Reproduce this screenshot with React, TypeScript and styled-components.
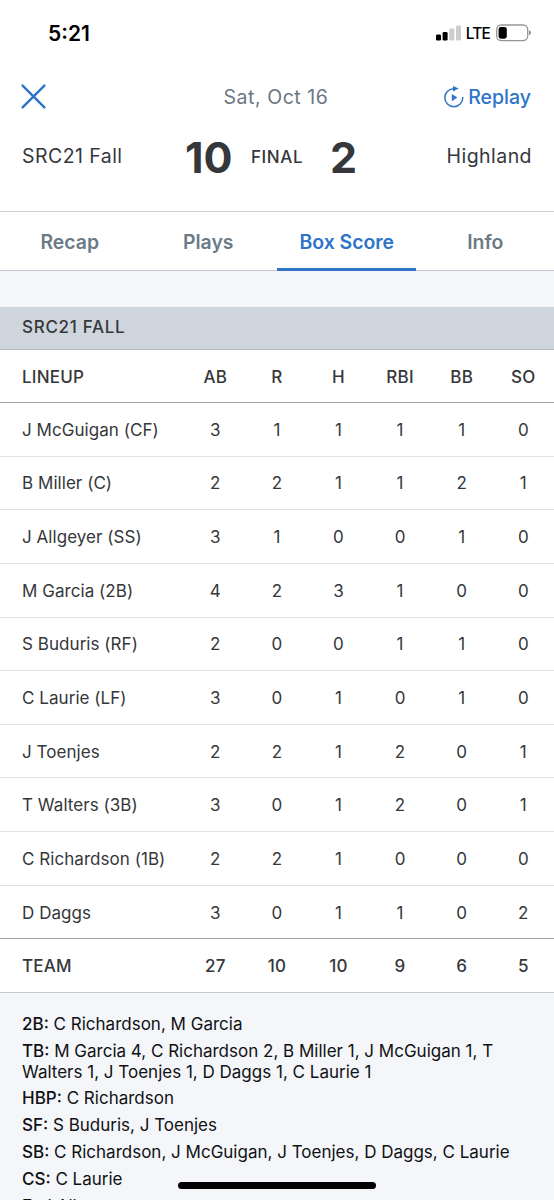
import React from 'react';
import styled, { createGlobalStyle } from 'styled-components';

const Global = createGlobalStyle`
  *, *::before, *::after { box-sizing: border-box; }
  body { margin: 0; background: #fff; font-family: Inter, "Liberation Sans", sans-serif; }
`;

const Screen = styled.main`
  position: relative;
  width: 554px;
  height: 1200px;
  overflow: hidden;
  display: flex;
  flex-direction: column;
  background: #fff;
  color: #35373b;
`;

const StatusBar = styled.div`
  flex: none;
  height: 66px;
  padding: 0 23px 0 48px;
  display: flex;
  align-items: center;
  justify-content: space-between;
  color: #000;
`;

const Clock = styled.span`
  font-size: 21px;
  font-weight: 600;
  letter-spacing: 0;
`;

const Indicators = styled.div`
  display: flex;
  align-items: center;
  gap: 5px;
`;

const Carrier = styled.span`
  font-size: 15.5px;
  font-weight: 500;
  letter-spacing: -0.8px;
  padding-top: 1px;
  margin-right: 1px;
`;

const NavBar = styled.header`
  flex: none;
  height: 62px;
  padding: 0 23px 0 21px;
  display: grid;
  grid-template-columns: 1fr auto 1fr;
  align-items: center;
`;

const CloseButton = styled.button`
  justify-self: start;
  display: flex;
  padding: 0 0 1px;
  border: 0;
  background: none;
`;

const GameDate = styled.span`
  font-size: 19.5px;
  letter-spacing: 0.55px;
  color: #6c7683;
`;

const ReplayButton = styled.button`
  justify-self: end;
  display: flex;
  align-items: center;
  gap: 4px;
  padding: 0;
  border: 0;
  background: none;
  font: 500 19.5px Inter, sans-serif;
  color: #2d74ca;
`;

const ScoreBoard = styled.section`
  flex: none;
  height: 83px;
  padding: 0 22px 27px;
  display: grid;
  grid-template-columns: 163px 48px 97px 1fr auto;
  align-items: center;
`;

const TeamName = styled.span`
  font-size: 19.5px;
  letter-spacing: 0.45px;
`;

const Score = styled.span`
  padding-top: 2px;
  font-size: 43px;
  font-weight: 700;
  line-height: 50px;
`;

const GameState = styled.span`
  padding: 1px 0 0 18px;
  font-size: 17px;
  font-weight: 500;
  letter-spacing: 0.6px;
`;

const Tabs = styled.nav`
  flex: none;
  height: 60px;
  display: grid;
  grid-template-columns: repeat(4, 1fr);
  border-top: 1px solid #c9cfd5;
  border-bottom: 1px solid #c5c9cf;
`;

const Tab = styled.button<{ $active?: boolean }>`
  height: 59px;
  padding: 3px 0 0 1px;
  border: 0;
  border-bottom: 3px solid ${p => (p.$active ? '#2d74ca' : 'transparent')};
  background: none;
  font: 600 19.4px Inter, sans-serif;
  color: ${p => (p.$active ? '#2d74ca' : '#6c7a87')};
`;

const TeamHeading = styled.h2`
  flex: none;
  height: 43px;
  margin: 36px 0 0;
  padding-left: 22px;
  border-bottom: 1px solid #b4bcc5;
  background: #cfd5dc;
  font-size: 17px;
  font-weight: 500;
  line-height: 41px;
  letter-spacing: 0.7px;
`;

const Content = styled.div`
  flex: 1;
  display: flex;
  flex-direction: column;
  background: #f4f6f9;
`;

const BoxTable = styled.div`
  flex: none;
  background: #fff;
`;

const Row = styled.div<{ $strong?: boolean; $line?: string; $height?: number }>`
  height: ${p => p.$height || 53.65}px;
  padding: 1px 0 0 22px;
  display: grid;
  grid-template-columns: 162.5px repeat(6, 61.6px);
  align-items: center;
  border-bottom: 1px solid ${p => p.$line || '#dedfe1'};
  font-size: 17px;
  font-weight: ${p => (p.$strong ? 500 : 400)};
  letter-spacing: ${p => (p.$strong ? 0.2 : 0.05)}px;
`;

const Stat = styled.span`
  text-align: center;
`;

const Notes = styled.div`
  display: flex;
  flex-direction: column;
  gap: 6px;
  padding: 21px 22px 0;
  font-size: 17px;
  line-height: 20.8px;
  color: #101114;
`;

const Note = styled.p`
  margin: 0;
`;

const NoteLabel = styled.b`
  font-weight: 500;
`;

const HomeIndicator = styled.div`
  position: absolute;
  left: 178px;
  bottom: 11px;
  width: 198px;
  height: 7px;
  border-radius: 4px;
  background: #000;
`;

const columns = ['AB', 'R', 'H', 'RBI', 'BB', 'SO'];

const lineup: [string, number[]][] = [
  ['J McGuigan (CF)', [3, 1, 1, 1, 1, 0]],
  ['B Miller (C)', [2, 2, 1, 1, 2, 1]],
  ['J Allgeyer (SS)', [3, 1, 0, 0, 1, 0]],
  ['M Garcia (2B)', [4, 2, 3, 1, 0, 0]],
  ['S Buduris (RF)', [2, 0, 0, 1, 1, 0]],
  ['C Laurie (LF)', [3, 0, 1, 0, 1, 0]],
  ['J Toenjes', [2, 2, 1, 2, 0, 1]],
  ['T Walters (3B)', [3, 0, 1, 2, 0, 1]],
  ['C Richardson (1B)', [2, 2, 1, 0, 0, 0]],
  ['D Daggs', [3, 0, 1, 1, 0, 2]],
];

const totals = [27, 10, 10, 9, 6, 5];

const notes = [
  ['2B', 'C Richardson, M Garcia'],
  ['TB', 'M Garcia 4, C Richardson 2, B Miller 1, J McGuigan 1, T Walters 1, J Toenjes 1, D Daggs 1, C Laurie 1'],
  ['HBP', 'C Richardson'],
  ['SF', 'S Buduris, J Toenjes'],
  ['SB', 'C Richardson, J McGuigan, J Toenjes, D Daggs, C Laurie'],
  ['CS', 'C Laurie'],
  ['E', 'J Allgeyer'],
];

const SignalIcon = () => (
  <svg width="25" height="16" viewBox="0 0 25 16">
    <rect x="0" y="9.5" width="5" height="6" rx="1.3" />
    <rect x="6.6" y="7" width="5" height="8.5" rx="1.3" />
    <rect x="13.3" y="3.5" width="5" height="12" rx="1.3" fill="#ccc" />
    <rect x="20" y="0.5" width="5" height="15" rx="1.3" fill="#ccc" />
  </svg>
);

const BatteryIcon = () => (
  <svg width="35" height="18" viewBox="0 0 35 18">
    <rect x="0.7" y="1" width="31" height="15.6" rx="4.5" fill="none" stroke="#969696" strokeWidth="1.3" />
    <rect x="2.6" y="2.9" width="8.2" height="11.8" rx="2.4" />
    <path d="M33 6.3q1.9.8 1.9 2.5T33 11.3z" fill="#888" />
  </svg>
);

const CloseIcon = () => (
  <svg width="25" height="25" viewBox="0 0 25 25" stroke="#2d74ca" strokeWidth="2.4" strokeLinecap="round">
    <path d="M1.6 1.6 23.4 23.4M23.4 1.6 1.6 23.4" />
  </svg>
);

const ReplayIcon = () => (
  <svg width="20" height="22" viewBox="0 0 20 22" fill="none" stroke="#2d74ca" strokeWidth="1.5">
    <path d="M10.5 2.7H10A9 9 0 1 0 18.8 11.6" strokeLinecap="round" />
    <path d="M9 0 14.6 2.6 9 5.4z" fill="#2d74ca" stroke="none" />
    <path d="M7.8 8 13.4 11.6 7.8 15.2z" fill="#2d74ca" stroke="none" />
  </svg>
);

export default function App() {
  return (
    <Screen>
      <Global />
      <StatusBar>
        <Clock>5:21</Clock>
        <Indicators>
          <SignalIcon />
          <Carrier>LTE</Carrier>
          <BatteryIcon />
        </Indicators>
      </StatusBar>
      <NavBar>
        <CloseButton aria-label="Close"><CloseIcon /></CloseButton>
        <GameDate>Sat, Oct 16</GameDate>
        <ReplayButton><ReplayIcon />Replay</ReplayButton>
      </NavBar>
      <ScoreBoard>
        <TeamName>SRC21 Fall</TeamName>
        <Score>10</Score>
        <GameState>FINAL</GameState>
        <Score>2</Score>
        <TeamName>Highland</TeamName>
      </ScoreBoard>
      <Tabs>
        <Tab>Recap</Tab>
        <Tab>Plays</Tab>
        <Tab $active>Box Score</Tab>
        <Tab>Info</Tab>
      </Tabs>
      <Content>
        <TeamHeading>SRC21 FALL</TeamHeading>
        <BoxTable>
          <Row $strong $line="#9aa3ac" $height={53}>
            <span>LINEUP</span>
            {columns.map(c => <Stat key={c}>{c}</Stat>)}
          </Row>
          {lineup.map(([name, stats], i) => (
            <Row key={name} $line={i === lineup.length - 1 ? '#9aa0a6' : undefined}>
              <span>{name}</span>
              {stats.map((s, j) => <Stat key={j}>{s}</Stat>)}
            </Row>
          ))}
          <Row $strong $line="#c5c9cf">
            <span>TEAM</span>
            {totals.map((t, j) => <Stat key={j}>{t}</Stat>)}
          </Row>
        </BoxTable>
        <Notes>
          {notes.map(([label, text]) => (
            <Note key={label}><NoteLabel>{label}:</NoteLabel> {text}</Note>
          ))}
        </Notes>
      </Content>
      <HomeIndicator />
    </Screen>
  );
}
